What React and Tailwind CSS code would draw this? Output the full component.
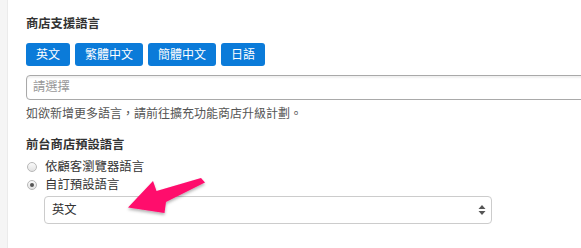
import React from "react";

const font = { fontFamily: '"Liberation Sans", "Noto Sans CJK TC", sans-serif' };

function Radio({ checked, label }) {
  return (
    <div className="flex items-center h-[18px]">
      <span className="w-[10px] h-[10px] rounded-full border border-[#b8b8b8] bg-gradient-to-b from-[#fafafa] to-[#e2e2e2] flex items-center justify-center">
        {checked && <span className="w-[4px] h-[4px] rounded-full bg-[#555]" />}
      </span>
      <span className="ml-[8px] text-[12.4px] leading-[18px] text-[#333]">{label}</span>
    </div>
  );
}

export default function App() {
  const langs = ["英文", "繁體中文", "簡體中文", "日語"];
  return (
    <div className="w-[581px] h-[248px] bg-white flex overflow-hidden relative" style={font}>
      <div className="w-[8px] h-full bg-[#f5f5f5] border-r border-[#ebebeb] shrink-0" />
      <div className="flex-1 pl-[18px] pt-[16px] min-w-0">
        <div className="text-[12.3px] leading-[16px] font-bold text-[#333]">商店支援語言</div>
        <div className="flex gap-[5px] mt-[11px]">
          {langs.map((l) => (
            <span key={l} className="h-[23px] px-[10px] flex items-center bg-[#0b7bd9] text-white text-[12px] rounded-[3px]">
              {l}
            </span>
          ))}
        </div>
        <div className="mt-[9px] w-[620px] h-[25px] border border-[#a9a9a9] rounded-l-[4px] shadow-[inset_0_2px_2px_rgba(0,0,0,0.06)] flex items-center pl-[6px] text-[12.3px] text-[#999]">
          請選擇
        </div>
        <div className="mt-[6px] text-[12px] leading-[16px] text-[#555]">如欲新增更多語言，請前往擴充功能商店升級計劃。</div>
        <div className="mt-[15px] text-[12.3px] leading-[16px] font-bold text-[#333]">前台商店預設語言</div>
        <div className="mt-[5px] ml-[1px]">
          <Radio label="依顧客瀏覽器語言" />
          <Radio checked label="自訂預設語言" />
        </div>
        <div className="mt-[2px] ml-[18px] w-[448px] h-[28px] border border-[#cccccc] rounded-[4px] flex items-center justify-between pl-[7px] pr-[5px] text-[12.3px] text-[#333]">
          <span>英文</span>
          <svg width="8" height="12" viewBox="0 0 8 12">
            <path d="M4 1 L7.5 5 L0.5 5 Z" fill="#555" />
            <path d="M4 11 L7.5 7 L0.5 7 Z" fill="#555" />
          </svg>
        </div>
      </div>
      <svg className="absolute left-0 top-0 pointer-events-none" width="581" height="248" viewBox="0 0 581 248">
        <defs>
          <filter id="sh" x="-20%" y="-20%" width="140%" height="160%">
            <feDropShadow dx="0" dy="2" stdDeviation="1.5" floodColor="#000" floodOpacity="0.3" />
          </filter>
        </defs>
        <path
          d="M128 207.5 L153 181 L156.5 191 L201 178 L205 182.5 L166 202 L164.5 213 Z"
          fill="#ff0a6c"
          filter="url(#sh)"
          strokeLinejoin="round"
        />
      </svg>
    </div>
  );
}
